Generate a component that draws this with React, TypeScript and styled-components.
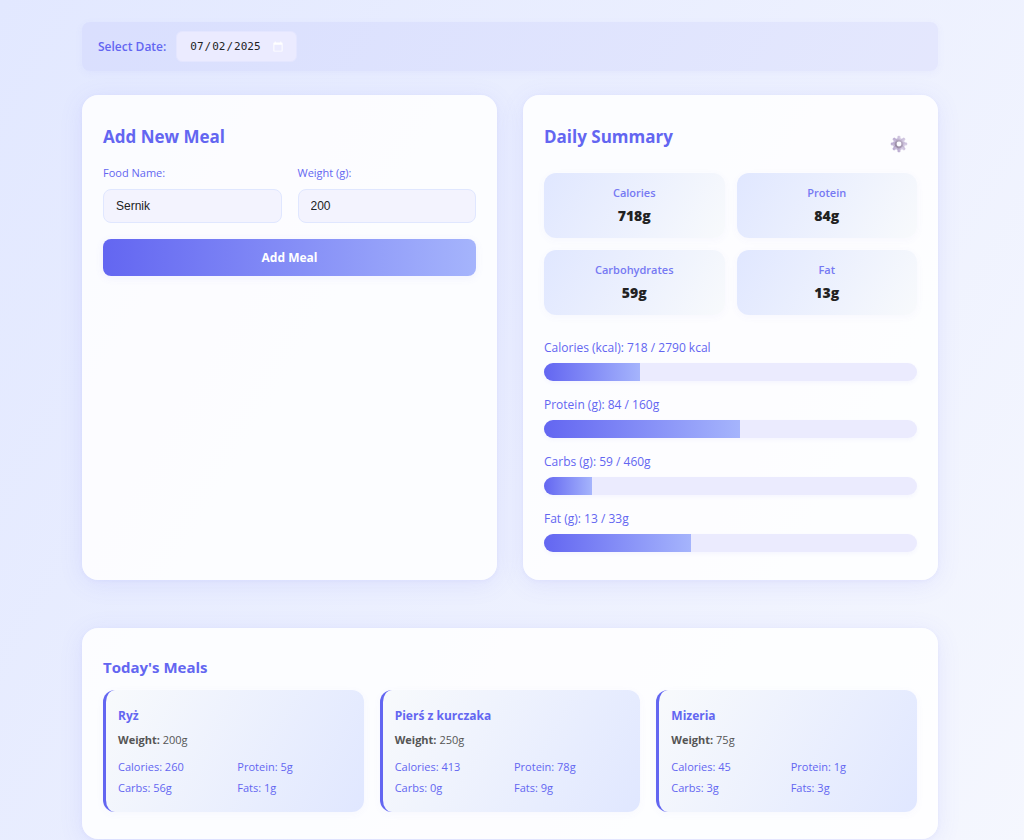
import React, { useState } from "react";
import styled, { createGlobalStyle } from "styled-components";

const GlobalStyle = createGlobalStyle`
  *, *::before, *::after { box-sizing: border-box; }
  body {
    margin: 0;
    min-height: 100vh;
    background: linear-gradient(120deg, #e2e8ff 0%, #f5f7fe 100%);
    color: #222222;
    font-family: "Segoe UI", "Open Sans", "Noto Sans", sans-serif;
    font-size: 12px;
    line-height: 16px;
  }
`;

const Page = styled.main`
  display: flex;
  flex-direction: column;
  padding: 22px 86px 24px 82px;
`;

const DateBar = styled.div`
  display: flex;
  align-items: center;
  gap: 10px;
  padding: 9px 16px;
  margin-bottom: 24px;
  border-radius: 8px;
  background: rgba(99, 102, 241, 0.07);
  box-shadow: 0 2px 8px rgba(99, 102, 241, 0.05);
`;

const DateLabel = styled.label`
  color: #6366f1;
  font-weight: 600;
  font-size: 12px;
`;

const DateInput = styled.input`
  width: 121px;
  height: 31px;
  padding: 0 12px;
  border: 1px solid #e4e6ff;
  border-radius: 6px;
  background: #ebebff;
  color: #222222;
  font-family: Consolas, "DejaVu Sans Mono", monospace;
  font-size: 11px;

  &::-webkit-calendar-picker-indicator {
    width: 12px;
    height: 12px;
    padding: 0;
    filter: invert(1);
  }
`;

const Columns = styled.div`
  display: grid;
  grid-template-columns: 1fr 1fr;
  gap: 26px;
  margin-bottom: 48px;
`;

const Card = styled.section`
  padding: 29px 21px 27px;
  border-radius: 16px;
  background: rgba(255, 255, 255, 0.85);
  box-shadow: 0 4px 24px rgba(99, 102, 241, 0.1), 0 1px 4px rgba(99, 102, 241, 0.06);
`;

const Title = styled.h2`
  margin: 0 0 15px;
  color: #6366f1;
  font-size: 17px;
  line-height: 26px;
  font-weight: 700;
`;

const MealsTitle = styled(Title)`
  margin-bottom: 13px;
  font-size: 15px;
  line-height: 20px;
`;

const MealForm = styled.form`
  display: grid;
  grid-template-columns: 1fr 1fr;
  gap: 16px;
`;

const Field = styled.div`
  display: flex;
  flex-direction: column;
  gap: 8px;
  min-width: 0;
`;

const FieldLabel = styled.label`
  color: #6366f1;
  font-size: 11px;
  font-weight: 500;
`;

const TextInput = styled.input`
  width: 100%;
  height: 34px;
  padding: 0 12px;
  border: 1px solid #e0e7ff;
  border-radius: 8px;
  background: #f3f3fe;
  color: #222222;
  font-family: "Liberation Sans", Arial, sans-serif;
  font-size: 12px;
`;

const SubmitButton = styled.button`
  grid-column: 1 / -1;
  height: 37px;
  border: 0;
  border-radius: 8px;
  background: linear-gradient(90deg, #6366f1 0%, #a5b4fc 100%);
  box-shadow: 0 2px 8px rgba(99, 102, 241, 0.08);
  color: #ffffff;
  font-family: inherit;
  font-size: 12px;
  font-weight: 700;
  cursor: pointer;
`;

const SummaryHeader = styled.div`
  display: flex;
  justify-content: space-between;
  align-items: flex-start;
  margin-bottom: 8px;
`;

const IconButton = styled.button`
  display: flex;
  align-items: center;
  justify-content: center;
  width: 37px;
  height: 40px;
  padding: 0;
  border: 0;
  background: none;
  cursor: pointer;
`;

const Stats = styled.div`
  display: grid;
  grid-template-columns: 1fr 1fr;
  gap: 12px;
  margin-bottom: 24px;
`;

const Stat = styled.div`
  display: flex;
  flex-direction: column;
  gap: 5px;
  padding: 12px;
  border-radius: 12px;
  background: linear-gradient(120deg, #e0e7ff 0%, #f8fafc 100%);
  box-shadow: 0 2px 8px rgba(99, 102, 241, 0.04);
  text-align: center;
`;

const StatLabel = styled.span`
  color: #7679f3;
  font-size: 11px;
  font-weight: 600;
`;

const StatValue = styled.span`
  font-size: 14px;
  line-height: 20px;
  font-weight: 800;
`;

const ProgressList = styled.div`
  display: flex;
  flex-direction: column;
  gap: 15px;
  padding-bottom: 1px;
`;

const ProgressLabel = styled.div`
  margin-bottom: 6px;
  color: #6366f1;
  font-size: 12px;
  line-height: 18px;
  font-weight: 500;
`;

const Track = styled.div`
  height: 18px;
  overflow: hidden;
  border-radius: 9px;
  background: #ebebfe;
  box-shadow: 0 2px 4px rgba(99, 102, 241, 0.05);
`;

const Fill = styled.div`
  height: 100%;
  background: linear-gradient(90deg, #6366f1 0%, #a5b4fc 100%);
`;

const MealGrid = styled.div`
  display: grid;
  grid-template-columns: repeat(3, 1fr);
  gap: 16px;
`;

const MealCard = styled.article`
  padding: 17px 12px 16px;
  border-left: 3px solid #6366f1;
  border-radius: 12px;
  background: linear-gradient(120deg, #f8fafc 0%, #e0e7ff 100%);
  box-shadow: 0 2px 8px rgba(99, 102, 241, 0.04);
`;

const MealName = styled.h3`
  margin: 0 0 7px;
  color: #6366f1;
  font-size: 12px;
  line-height: 18px;
  font-weight: 700;
`;

const MealWeight = styled.p`
  margin: 0 0 11px;
  color: #555555;
  font-size: 11px;
`;

const Macros = styled.div`
  display: grid;
  grid-template-columns: 1fr 1fr;
  gap: 5px;
  color: #6366f1;
  font-size: 11px;
`;

const stats = [
  { label: "Calories", value: "718g" },
  { label: "Protein", value: "84g" },
  { label: "Carbohydrates", value: "59g" },
  { label: "Fat", value: "13g" },
];

const goals = [
  { label: "Calories (kcal)", value: 718, goal: 2790, unit: " kcal" },
  { label: "Protein (g)", value: 84, goal: 160, unit: "g" },
  { label: "Carbs (g)", value: 59, goal: 460, unit: "g" },
  { label: "Fat (g)", value: 13, goal: 33, unit: "g" },
];

const meals = [
  { name: "Ryż", weight: 200, calories: 260, protein: 5, carbs: 56, fats: 1 },
  { name: "Pierś z kurczaka", weight: 250, calories: 413, protein: 78, carbs: 0, fats: 9 },
  { name: "Mizeria", weight: 75, calories: 45, protein: 1, carbs: 3, fats: 3 },
];

function GearIcon() {
  return (
    <svg width="18" height="18" viewBox="0 0 18 18" aria-hidden="true">
      <defs>
        <linearGradient id="gear" x1="0" y1="1" x2="1" y2="0">
          <stop offset="0" stopColor="#b3a3cb" />
          <stop offset="1" stopColor="#ddd5e8" />
        </linearGradient>
        <linearGradient id="hub" x1="0" y1="1" x2="1" y2="0">
          <stop offset="0" stopColor="#94879f" />
          <stop offset="1" stopColor="#beb2ca" />
        </linearGradient>
      </defs>
      <g fill="url(#gear)">
        <circle cx="9" cy="9" r="6" />
        {[0, 45, 90, 135].map((angle) => (
          <path key={angle} d="M7.7 1Q9 .4 10.3 1L10.7 4V14L10.3 17Q9 17.6 7.7 17L7.3 14V4Z" transform={`rotate(${angle} 9 9)`} />
        ))}
      </g>
      <circle cx="9" cy="9" r="3.4" fill="#fcfcff" stroke="url(#hub)" strokeWidth="2" />
    </svg>
  );
}

export default function App() {
  const [date, setDate] = useState("2025-07-02");
  const [food, setFood] = useState("Sernik");
  const [weight, setWeight] = useState("200");

  return (
    <>
      <GlobalStyle />
      <Page>
        <DateBar>
          <DateLabel htmlFor="date">Select Date:</DateLabel>
          <DateInput id="date" type="date" value={date} onChange={(e) => setDate(e.target.value)} />
        </DateBar>

        <Columns>
          <Card>
            <Title>Add New Meal</Title>
            <MealForm onSubmit={(e) => e.preventDefault()}>
              <Field>
                <FieldLabel htmlFor="food">Food Name:</FieldLabel>
                <TextInput id="food" type="text" value={food} onChange={(e) => setFood(e.target.value)} />
              </Field>
              <Field>
                <FieldLabel htmlFor="weight">Weight (g):</FieldLabel>
                <TextInput id="weight" type="number" value={weight} onChange={(e) => setWeight(e.target.value)} />
              </Field>
              <SubmitButton type="submit">Add Meal</SubmitButton>
            </MealForm>
          </Card>

          <Card>
            <SummaryHeader>
              <Title>Daily Summary</Title>
              <IconButton type="button" aria-label="Settings">
                <GearIcon />
              </IconButton>
            </SummaryHeader>
            <Stats>
              {stats.map((s) => (
                <Stat key={s.label}>
                  <StatLabel>{s.label}</StatLabel>
                  <StatValue>{s.value}</StatValue>
                </Stat>
              ))}
            </Stats>
            <ProgressList>
              {goals.map((g) => (
                <div key={g.label}>
                  <ProgressLabel>{`${g.label}: ${g.value} / ${g.goal}${g.unit}`}</ProgressLabel>
                  <Track role="progressbar" aria-label={g.label} aria-valuenow={g.value} aria-valuemin={0} aria-valuemax={g.goal}>
                    <Fill style={{ width: `${(g.value / g.goal) * 100}%` }} />
                  </Track>
                </div>
              ))}
            </ProgressList>
          </Card>
        </Columns>

        <Card>
          <MealsTitle>Today's Meals</MealsTitle>
          <MealGrid>
            {meals.map((m) => (
              <MealCard key={m.name}>
                <MealName>{m.name}</MealName>
                <MealWeight>
                  <strong>Weight:</strong> {m.weight}g
                </MealWeight>
                <Macros>
                  <span>{`Calories: ${m.calories}`}</span>
                  <span>{`Protein: ${m.protein}g`}</span>
                  <span>{`Carbs: ${m.carbs}g`}</span>
                  <span>{`Fats: ${m.fats}g`}</span>
                </Macros>
              </MealCard>
            ))}
          </MealGrid>
        </Card>
      </Page>
    </>
  );
}
